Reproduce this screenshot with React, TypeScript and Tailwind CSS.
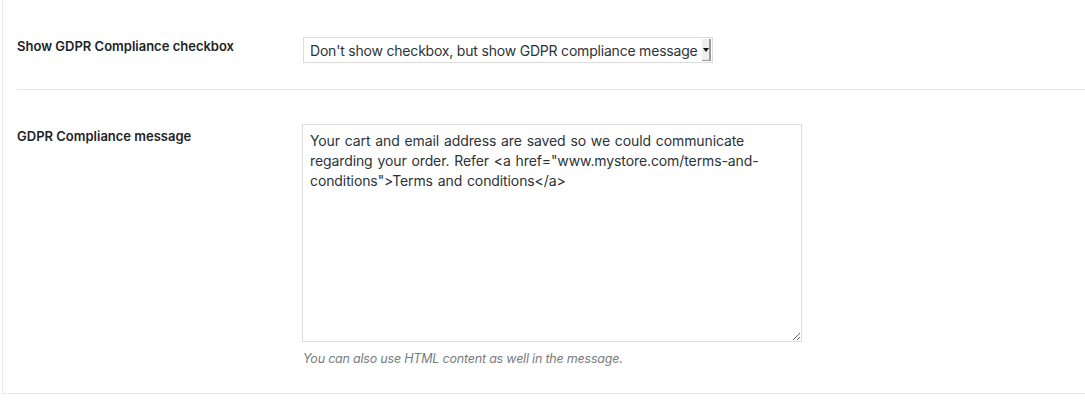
import { useState } from "react";

const message =
  'Your cart and email address are saved so we could communicate regarding your order. Refer <a href="www.mystore.com/terms-and-conditions">Terms and conditions</a>';

export default function App() {
  const [text, setText] = useState(message);

  return (
    <div className="min-h-[413px] bg-white font-['Inter',sans-serif] text-[#2c3338]">
      <div className="ml-[2px] h-[394px] border-b border-l border-[#e8e8e8]">
        {/* checkbox setting */}
        <div className="ml-[14px] flex h-[90px] items-start border-b border-[#e8e8e8] pt-[36px]">
          <label className="w-[286px] text-[13px] leading-[20px] font-semibold text-[#1d2327]">
            Show GDPR Compliance checkbox
          </label>
          <div className="mt-[1px] flex h-[26px] w-[410px] items-center justify-between border border-[#dddddd] bg-white pl-[6px] pr-[1px]">
            <span className="text-[14px] tracking-[-0.2px] whitespace-nowrap">
              Don't show checkbox, but show GDPR compliance message
            </span>
            <span className="flex h-[22px] w-[9px] items-center justify-center border-r-2 border-b border-[#9a9a9a] bg-[#eeeeee]">
              <span className="block h-0 w-0 border-x-[3px] border-t-[4px] border-x-transparent border-t-[#111]" />
            </span>
          </div>
        </div>

        {/* message setting */}
        <div className="ml-[14px] flex items-start pt-[34px]">
          <label className="mt-[2px] w-[285px] text-[13px] leading-[20px] font-semibold text-[#1d2327]">
            GDPR Compliance message
          </label>
          <div className="flex flex-col">
            <textarea
              value={text}
              onChange={(e) => setText(e.target.value)}
              className="h-[218px] w-[500px] border border-[#dddddd] px-[7px] py-[6px] text-[14px] leading-[20px] tracking-[-0.1px] [word-spacing:1px] text-[#2c3338] outline-none"
            />
            <p className="mt-[8px] pl-[1px] text-[12.5px] leading-[18px] tracking-[-0.2px] text-[#787c82] italic">
              You can also use HTML content as well in the message.
            </p>
          </div>
        </div>
      </div>
    </div>
  );
}
